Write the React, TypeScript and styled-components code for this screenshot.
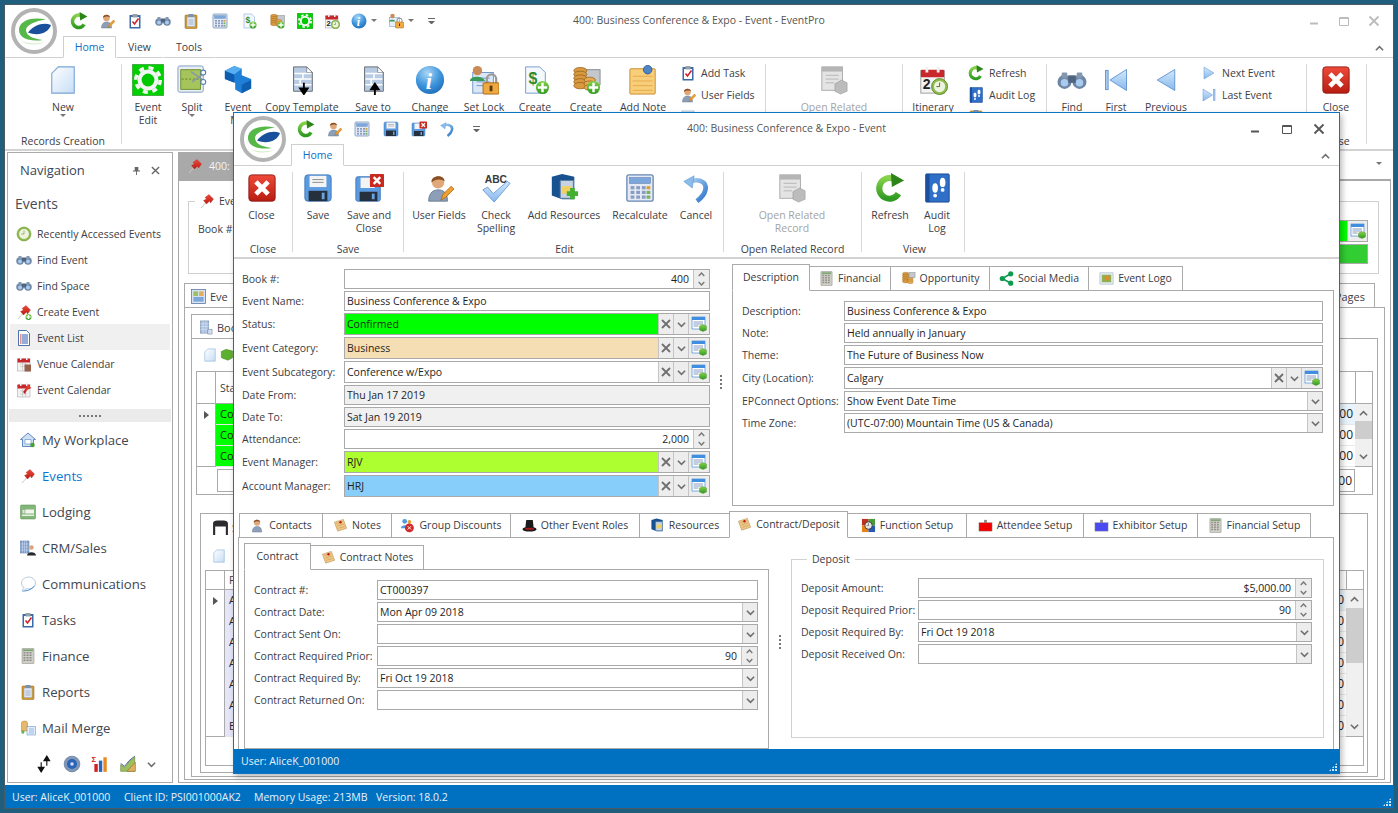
import React, { ReactNode } from "react";
import styled, { createGlobalStyle } from "styled-components";

const GlobalStyle = createGlobalStyle`
  html, body { margin: 0; padding: 0; background: #1f5f7d; overflow: hidden; }
  body { font-family: "Open Sans", "Noto Sans", sans-serif; font-size: 10.5px; color: #3d3d45; }
  * { box-sizing: border-box; }
`;

const TEXT = { fontFamily: "Liberation Sans, sans-serif" };

// icon drawings, all on a 32 x 32 canvas
const page = (fill = "#f4f8fd", stroke = "#6f9ad0") => (
  <path d="M6 2 H21 L27 8 V30 H6Z" fill={fill} stroke={stroke} />
);
const plus = (x = 23, y = 23, r = 7) => (
  <>
    <circle cx={x} cy={y} r={r} fill="url(#gGreen)" />
    <path d={`M${x - r + 2} ${y}H${x + r - 2}M${x} ${y - r + 2}V${y + r - 2}`} stroke="#fff" strokeWidth="2.6" />
  </>
);
const person = (
  <>
    <path d="M5 30 C5 20 11 18 15 18 C20 18 25 20 25 30Z" fill="#8d9fb8" stroke="#6b7c93" />
    <circle cx="15" cy="10" r="6.5" fill="#e0a878" />
    <path d="M8 10 C7 2 22 1 22 9 C19 6 12 6 8 10Z" fill="#8a4f24" />
  </>
);
const pencil = <path d="M18 29 L20 23 L29 14 L32 17 L23 26Z" fill="#f0a030" stroke="#a86410" strokeWidth=".8" />;
const cube = <path d="M17 20 L24 17 L31 20 V28 L24 31 L17 28Z" fill="url(#gGreen)" stroke="#3c7a10" strokeWidth=".6" />;
const coins = (
  <>
    {[6, 10, 14, 18, 22].map((y) => (
      <ellipse key={y} cx="10" cy={y} rx="7" ry="3.4" fill="#d9993f" stroke="#94601c" strokeWidth=".8" />
    ))}
    {[16, 20, 24].map((y) => (
      <ellipse key={y} cx="20" cy={y} rx="6" ry="3" fill="#e5ac52" stroke="#94601c" strokeWidth=".8" />
    ))}
  </>
);
const cabinet = (
  <>
    <path d="M3 4 L14 1 L27 4 V28 H14 L3 24Z" fill="#17518f" />
    <path d="M12 8 H26 V27 H12Z" fill="#c5d3e3" stroke="#5f7ea3" />
    <path d="M14 14 H24 V22 H14Z" fill="#f0d060" />
  </>
);
const pin = (
  <>
    <path d="M4 30 L13 20" stroke="#c9c9c9" strokeWidth="2" />
    <path d="M12 9 L20 3 L29 12 L23 20 L21 16 L15 22 L9 15 L15 12Z" fill="url(#gRed)" stroke="#a81010" strokeWidth=".6" />
  </>
);
const clockFace = (cx: number, cy: number, r: number) => (
  <>
    <circle cx={cx} cy={cy} r={r} fill="#8fbc4f" stroke="#5e8a2a" />
    <circle cx={cx} cy={cy} r={r * 0.7} fill="#eef3df" />
    <path d={`M${cx} ${cy - r * 0.5}V${cy}H${cx - r * 0.4}`} stroke="#4f6f2a" fill="none" />
  </>
);
const calendar = (
  <>
    <rect x="3" y="6" width="25" height="24" fill="#f3f3f3" stroke="#9b9b9b" />
    <rect x="3" y="5" width="25" height="8" rx="1" fill="#c8282c" />
    <rect x="8" y="2" width="3" height="6" fill="#f0f0f0" />
    <rect x="20" y="2" width="3" height="6" fill="#f0f0f0" />
  </>
);
const cells = [8, 13, 18, 23].flatMap((y) =>
  [7, 13, 19].map((x) => <rect key={`${x}-${y}`} x={x} y={y} width="4" height="3" fill="#8e8e86" />),
);
const doc = (
  <>
    <path d="M7 2 H21 L27 8 V28 H7Z" fill="#b7cbe3" stroke="#62676e" />
    <path d="M21 2 V8 H27Z" fill="#fff" stroke="#62676e" strokeWidth=".7" />
    <path d="M8 9H26M8 15H26M8 21H26M17 9V15M14 15V21" stroke="#fff" strokeWidth="1.6" />
  </>
);
const noteEnv = (
  <>
    <path d="M3 9 L22 3 L29 22 L10 28Z" fill="#f0c98a" stroke="#a87a32" />
    <path d="M7 12 L21 8M9 17 L23 13M11 22 L25 18" stroke="#b5863a" />
    <circle cx="16" cy="9" r="2.5" fill="#c01818" />
  </>
);
const ICONS: Record<string, ReactNode> = {
  refresh: (
    <>
      <path d="M25 22 A11 11 0 1 1 19 6" fill="none" stroke="url(#gGreen)" strokeWidth="6.5" />
      <path d="M17 0 L31 8 L18 15Z" fill="#2d8418" />
    </>
  ),
  userEdit: <>{person}{pencil}</>,
  task: (
    <>
      <rect x="5" y="4" width="22" height="27" rx="1" fill="#3a6ba8" />
      <rect x="8" y="8" width="16" height="20" fill="#fff" />
      <rect x="11" y="2" width="10" height="7" rx="1" fill="#9aa0a8" />
      <path d="M11 17 L15 22 L23 11" fill="none" stroke="#d0202a" strokeWidth="3" />
    </>
  ),
  binoculars: (
    <>
      <circle cx="8" cy="18" r="7.5" fill="#6f87a6" />
      <circle cx="24" cy="18" r="7.5" fill="#6f87a6" />
      <circle cx="8" cy="19" r="4" fill="#a9cbef" />
      <circle cx="24" cy="19" r="4" fill="#a9cbef" />
      <rect x="12" y="11" width="8" height="8" fill="#4f6480" />
      <rect x="5" y="8" width="6" height="6" rx="1" fill="#8397af" />
      <rect x="21" y="8" width="6" height="6" rx="1" fill="#8397af" />
    </>
  ),
  clipOrange: (
    <>
      <rect x="4" y="4" width="24" height="27" rx="2" fill="#d59a2e" stroke="#8d6114" />
      <rect x="8" y="8" width="16" height="19" fill="#dfe8f4" stroke="#8aa0bb" />
      <rect x="11" y="2" width="10" height="6" rx="1" fill="#7792b5" />
      <path d="M11 14H21M11 18H21M11 22H21" stroke="#6c7f98" />
    </>
  ),
  calc: (
    <>
      <rect x="2" y="2" width="28" height="28" rx="2" fill="#e3eaf6" stroke="#6685b4" strokeWidth="1.4" />
      <rect x="5" y="5" width="22" height="6" fill="#7ca7dc" stroke="#5678a8" strokeWidth=".6" />
      {[14, 19, 24].flatMap((y) =>
        [6, 12, 18, 23].map((x, i) => (
          <rect key={`${x}${y}`} x={x} y={y} width="4" height="3.4" fill={i === 3 ? (y === 14 ? "#e0a030" : "#7bb060") : "#8a9cc0"} />
        )),
      )}
    </>
  ),
  moneyAdd: (
    <>
      {page()}
      <text x="9" y="20" fontSize="17" fontWeight="700" fill="#2f8a2f" style={TEXT}>$</text>
      {plus(24, 24, 7)}
    </>
  ),
  coinsAdd: (
    <>
      <rect x="14" y="5" width="17" height="16" fill="#c4c8cc" stroke="#85898d" />
      {coins}
      {plus(24, 24, 7)}
    </>
  ),
  gear: (
    <>
      <rect x="0" y="0" width="32" height="32" fill="#00d000" stroke="#8a8a8a" />
      <circle cx="16" cy="16" r="10.5" fill="#f4f4f4" />
      <circle cx="16" cy="16" r="12.2" fill="none" stroke="#f4f4f4" strokeWidth="3.6" strokeDasharray="5 4.6" />
      <circle cx="16" cy="16" r="6.4" fill="#00c800" />
    </>
  ),
  cal20: (
    <>
      {calendar}
      <text x="5" y="26" fontSize="15" fontWeight="700" fill="#222" style={TEXT}>2</text>
      {clockFace(23, 23, 8.5)}
    </>
  ),
  info: (
    <>
      <circle cx="16" cy="16" r="15" fill="url(#gBall)" />
      <text x="11.5" y="26" fontSize="24" fontStyle="italic" fontWeight="700" fill="#fff" style={{ fontFamily: "Liberation Serif, serif" }}>i</text>
    </>
  ),
  lockUser: (
    <>
      <rect x="3" y="9" width="20" height="18" fill="#e6eefa" stroke="#6c93c8" />
      <circle cx="9" cy="6" r="4.5" fill="#c98b58" />
      <path d="M2 17 C2 12 14 12 15 17Z" fill="#3a9a5a" />
      <path d="M18 19 V15 A5 5 0 0 1 28 15 V19" fill="none" stroke="#8a8a8a" strokeWidth="2" />
      <rect x="15" y="18" width="16" height="12" rx="1" fill="#f0a840" stroke="#a86a14" />
      <rect x="22" y="21" width="2" height="5" fill="#5a3a10" />
    </>
  ),
  newPage: <path d="M11 2 H28 V30 H4 V9Z" fill="url(#gPage)" stroke="#7aa6d6" strokeWidth="1.2" />,
  split: (
    <>
      <rect x="1" y="1" width="27" height="28" rx="2" fill="#e8eef6" stroke="#7f9cc0" />
      <rect x="4" y="5" width="21" height="21" fill="#a6c45c" stroke="#6f8f2c" />
      <path d="M5 15H24" stroke="#5a7a20" strokeDasharray="2 2" />
      <path d="M15 7 L29 17M29 9 L16 18" stroke="#8a96a8" strokeWidth="1.6" />
      <circle cx="28" cy="8" r="2.6" fill="#fff" stroke="#5080b8" strokeWidth="1.2" />
      <circle cx="28" cy="18" r="2.6" fill="#fff" stroke="#5080b8" strokeWidth="1.2" />
    </>
  ),
  block: (
    <>
      <path d="M2 6 L12 1 L20 4 V11 L30 15 V25 L20 30 L13 26 V19 L2 15Z" fill="#1f7ed6" />
      <path d="M2 6 L12 10 V19 L2 15Z" fill="#0d5cb0" />
      <path d="M20 21 L30 16 V25 L20 30Z" fill="#0f5eb0" />
      <path d="M12 1 L20 4 L12 10 L2 6Z" fill="#56adf0" />
    </>
  ),
  tplDown: (
    <>
      {doc}
      <path d="M18 19 V28M14 25 L18 31 L22 25Z" fill="#000" stroke="#000" strokeWidth="2" />
    </>
  ),
  tplUp: (
    <>
      {doc}
      <path d="M18 32 V23M14 26 L18 20 L22 26Z" fill="#000" stroke="#000" strokeWidth="2" />
    </>
  ),
  setLock: (
    <>
      <rect x="4" y="8" width="22" height="22" fill="#dbe7f7" stroke="#6c93c8" />
      <path d="M8 14H22M8 18H22M8 22H16" stroke="#6c93c8" />
      <circle cx="9" cy="6" r="5" fill="#c98b58" />
      <path d="M1 17 C1 11 15 11 17 17Z" fill="#3a9a5a" />
      <path d="M19 20 V15 A5 5 0 0 1 29 15 V20" fill="none" stroke="#9a9a9a" strokeWidth="2.4" />
      <rect x="15" y="19" width="17" height="12" rx="1" fill="#f0a840" stroke="#a86a14" />
      <rect x="22" y="22" width="3" height="6" fill="#5a3a10" />
    </>
  ),
  note: (
    <>
      <rect x="2" y="4" width="27" height="27" rx="1" fill="#f7cf7a" stroke="#c98a2a" />
      <path d="M5 12H26M5 17H26M5 22H26M5 27H26" stroke="#e9a84a" />
      <circle cx="21" cy="5" r="4.5" fill="#4f86c8" stroke="#2c5a96" />
    </>
  ),
  related: (
    <>
      <rect x="3" y="2" width="22" height="25" fill="#e4e4e4" stroke="#aaa" />
      <rect x="3" y="2" width="22" height="5" fill="#b5b5b5" />
      <path d="M7 11H21M7 15H21M7 19H16" stroke="#b5b5b5" />
      <path d="M17 20 L24 16 L30 19 V28 L23 31 L17 28Z" fill="#bcbcbc" stroke="#9a9a9a" strokeWidth=".6" />
    </>
  ),
  audit: (
    <>
      <rect x="4" y="1" width="25" height="30" rx="1" fill="#2f6fc8" stroke="#1a4a90" />
      <rect x="4" y="1" width="4" height="30" fill="#1c4f9e" />
      <ellipse cx="14" cy="16" rx="3" ry="5" fill="#fff" />
      <circle cx="14" cy="24" r="2" fill="#fff" />
      <ellipse cx="22" cy="10" rx="3" ry="5" fill="#fff" />
      <circle cx="22" cy="18" r="2" fill="#fff" />
    </>
  ),
  first: (
    <>
      <rect x="4" y="5" width="3" height="22" fill="#a8ccf0" stroke="#5a90d0" />
      <path d="M28 4 V28 L9 16Z" fill="url(#gTri)" stroke="#5a90d0" />
    </>
  ),
  prev: <path d="M26 4 V28 L6 16Z" fill="url(#gTri)" stroke="#5a90d0" />,
  next: <path d="M6 4 V28 L26 16Z" fill="url(#gTri)" stroke="#5a90d0" />,
  last: (
    <>
      <path d="M4 4 V28 L23 16Z" fill="url(#gTri)" stroke="#5a90d0" />
      <rect x="25" y="5" width="3" height="22" fill="#a8ccf0" stroke="#5a90d0" />
    </>
  ),
  close: (
    <>
      <rect x="2" y="2" width="28" height="28" rx="3" fill="url(#gRed)" stroke="#8f1a12" />
      <path d="M9.5 9.5 L22.5 22.5M22.5 9.5 L9.5 22.5" stroke="#fff" strokeWidth="5" />
    </>
  ),
  save: (
    <>
      <rect x="2" y="2" width="28" height="28" rx="3" fill="#5c9be0" stroke="#3f78bb" />
      <rect x="7" y="3" width="18" height="12" fill="#f4f4f4" />
      <path d="M10 7H22M10 10H22" stroke="#8a8a8a" />
      <rect x="6" y="19" width="20" height="11" fill="#26303c" />
      <rect x="20" y="21" width="3" height="7" fill="#6aa4e0" />
    </>
  ),
  saveClose: (
    <>
      <rect x="2" y="4" width="26" height="26" rx="2" fill="#5c9be0" stroke="#3f78bb" />
      <rect x="7" y="5" width="15" height="11" fill="#f4f4f4" />
      <rect x="6" y="20" width="19" height="10" fill="#26303c" />
      <rect x="19" y="22" width="3" height="6" fill="#6aa4e0" />
      <rect x="17" y="1" width="15" height="14" rx="1" fill="#c92a20" />
      <path d="M21 4.5 L28 11.5M28 4.5 L21 11.5" stroke="#fff" strokeWidth="2.6" />
    </>
  ),
  check: (
    <>
      <text x="4" y="11" fontSize="11" fontWeight="700" fill="#3a3a3a" style={TEXT}>ABC</text>
      <path d="M2 18 L7 15 L13 22 L28 9 L31 11 L14 31Z" fill="url(#gTri)" stroke="#6a9ed8" />
    </>
  ),
  addRes: <>{cabinet}<path d="M19 22H31M25 16V28" stroke="#44b030" strokeWidth="5" /></>,
  undo: (
    <>
      <path d="M7 10 C18 5 28 9 26 18 C25 23 21 27 17 30" fill="none" stroke="url(#gTri2)" strokeWidth="5" />
      <path d="M3 9 L14 3 L12 16Z" fill="#8cbcec" stroke="#5a90d0" strokeWidth=".6" />
    </>
  ),
  clock: clockFace(16, 16, 14),
  pin,
  pinAdd: <>{pin}{plus(25, 26, 6)}</>,
  list: (
    <>
      <path d="M5 1 H21 L27 7 V31 H5Z" fill="#fff" stroke="#1f4f96" strokeWidth="1.6" />
      {[9, 13, 17, 21, 25].map((y) => (
        <g key={y}>
          <rect x="8" y={y} width="3" height="2" fill="#c02020" />
          <rect x="12" y={y} width="12" height="2" fill="#2a5ab0" />
        </g>
      ))}
    </>
  ),
  venueCal: (
    <>
      {calendar}
      <path d="M8 16H23M8 21H23M13 13V30M19 13V30" stroke="#b5b5b5" />
      <rect x="17" y="17" width="13" height="14" fill="#96604a" />
    </>
  ),
  eventCal: (
    <>
      {calendar}
      <path d="M8 18H23M8 24H23M13 13V30M19 13V30" stroke="#b5b5b5" />
      <path d="M14 20 L24 6 L31 12 L22 16 L18 24Z" fill="url(#gRed)" />
    </>
  ),
  home: (
    <>
      <path d="M1 15 L16 2 L31 15 L27 15 V29 H5 V15Z" fill="#cfe0f4" stroke="#3f74b4" strokeWidth="1.6" />
      <path d="M10 15 H22 V24 H10Z" fill="#fff" stroke="#3f74b4" />
      <circle cx="25" cy="26" r="4.5" fill="#4aa030" />
    </>
  ),
  bed: (
    <>
      <rect x="1" y="2" width="30" height="28" rx="2" fill="#83b77a" stroke="#55884c" />
      <rect x="4" y="11" width="24" height="8" fill="#f4f4ee" />
      <rect x="4" y="11" width="6" height="8" fill="#d8e6d4" stroke="#6a9a60" />
      <rect x="4" y="21" width="24" height="3" fill="#e6efe2" />
    </>
  ),
  crm: (
    <>
      <rect x="1" y="2" width="17" height="24" fill="#7fa0d0" stroke="#50709f" />
      <path d="M5 2V26M9 2V26M13 2V26M1 8H18M1 14H18M1 20H18" stroke="#e4edf7" strokeWidth=".8" />
      <circle cx="23" cy="15" r="4.5" fill="#d8a67a" />
      <path d="M14 31 C14 22 32 22 32 31Z" fill="#26282c" />
    </>
  ),
  bubble: (
    <>
      <ellipse cx="17" cy="14" rx="14" ry="12" fill="#fff" stroke="#9fb5cc" strokeWidth="1.4" />
      <path d="M5 30 C10 30 20 30 29 20" fill="none" stroke="#3f8ad0" strokeWidth="2" />
      <path d="M8 22 L4 30 L13 26" fill="#fff" stroke="#9fb5cc" strokeWidth="1.2" />
    </>
  ),
  calcGrey: (
    <>
      <rect x="4" y="1" width="24" height="30" rx="1" fill="#cfcfc8" stroke="#84847c" />
      <rect x="6" y="3" width="20" height="3" fill="#6f9f62" />
      {cells}
    </>
  ),
  merge: (
    <>
      <path d="M3 6 A6 4 0 0 1 15 6 V22 H3Z" fill="#e8b96a" stroke="#a87a2a" />
      <rect x="14" y="13" width="17" height="17" fill="#e4eefa" stroke="#4f86c8" />
      <path d="M18 18H28M18 22H28M18 26H28" stroke="#4f86c8" />
      <path d="M2 24H9M6 21V28" stroke="#3aa030" strokeWidth="2" />
    </>
  ),
  tableAdd: (
    <>
      <rect x="2" y="2" width="26" height="24" fill="#fff" stroke="#2f7ad0" strokeWidth="1.2" />
      <rect x="2" y="2" width="26" height="6" fill="#3f8ee0" />
      <path d="M5 12H24M5 16H24M5 20H15" stroke="#5f7fa8" strokeWidth="1.5" />
      {cube}
    </>
  ),
  sort: (
    <>
      <path d="M11 29 V13M6 22 L11 30 L16 22Z" fill="#111" stroke="#111" strokeWidth="2" />
      <path d="M21 3 V19M16 10 L21 2 L26 10Z" fill="#111" stroke="#111" strokeWidth="2" />
    </>
  ),
  disc: (
    <>
      <circle cx="16" cy="16" r="14" fill="#8097b5" stroke="#4f6a8c" />
      <circle cx="16" cy="16" r="9" fill="#2a64b8" />
      <circle cx="16" cy="16" r="3" fill="#d8e4f4" />
    </>
  ),
  bars: (
    <>
      <text x="1" y="13" fontSize="14" fontWeight="700" fill="#d02020" style={TEXT}>Σ</text>
      <rect x="6" y="16" width="6" height="14" fill="#d02020" />
      <rect x="14" y="10" width="6" height="20" fill="#2a64c0" />
      <rect x="22" y="4" width="6" height="26" fill="#e88a20" />
    </>
  ),
  chart: (
    <>
      <path d="M3 29 V17 L10 22 L18 12 L28 3 V29Z" fill="#9cc060" stroke="#5a7a2a" />
      <path d="M3 15 L10 20 L18 10 L28 2" fill="none" stroke="#3a5a9a" strokeWidth="1.6" />
      <path d="M14 29 L29 13 V29Z" fill="#e0b060" stroke="#8a6a20" />
    </>
  ),
  share: (
    <>
      <path d="M25 6 L7 16 L25 26" fill="none" stroke="#0f9a50" strokeWidth="3.4" />
      <circle cx="25" cy="6" r="5.5" fill="#0f9a50" />
      <circle cx="7" cy="16" r="5.5" fill="#0f9a50" />
      <circle cx="25" cy="26" r="5.5" fill="#0f9a50" />
    </>
  ),
  picture: (
    <>
      <rect x="2" y="4" width="28" height="24" fill="#e4ecf4" stroke="#8a9ab0" />
      <rect x="6" y="8" width="20" height="16" fill="#8fb050" />
      <circle cx="17" cy="15" r="5" fill="#e08a30" />
    </>
  ),
  coins: <>{coins}<rect x="17" y="3" width="13" height="11" fill="#c4c8cc" stroke="#85898d" /></>,
  contact: person,
  noteEnv,
  group: (
    <>
      <circle cx="10" cy="7" r="5" fill="#4f9ae0" />
      <path d="M2 22 C2 13 18 13 18 22Z" fill="#4f9ae0" />
      <circle cx="20" cy="8" r="4" fill="#e0a030" />
      <circle cx="20" cy="21" r="9.5" fill="#d02a2a" />
      <path d="M16.5 17.5 L23.5 24.5M23.5 17.5 L16.5 24.5" stroke="#fff" strokeWidth="2" />
    </>
  ),
  hat: (
    <>
      <path d="M9 4 H23 L25 22 H7Z" fill="#1a1a1a" />
      <ellipse cx="16" cy="24" rx="15" ry="5" fill="#1a1a1a" />
      <path d="M7 21 H25 V25 H7Z" fill="#b01818" />
    </>
  ),
  resources: cabinet,
  func: (
    <>
      <rect x="2" y="2" width="14" height="14" fill="#c03020" />
      <rect x="16" y="2" width="14" height="14" fill="#4a9a3a" />
      <rect x="2" y="16" width="14" height="14" fill="#e8801a" />
      <rect x="16" y="16" width="14" height="14" fill="#2a5ab0" />
      <circle cx="16" cy="16" r="8" fill="#e4e4e4" stroke="#222" strokeWidth="1.6" />
      <path d="M16 11V16H12" stroke="#222" fill="none" />
    </>
  ),
  attendee: (
    <>
      <rect x="13" y="4" width="6" height="8" fill="#8a8a8a" />
      <rect x="2" y="10" width="28" height="18" fill="#f00000" stroke="#9a9a9a" />
    </>
  ),
  exhibitor: (
    <>
      <rect x="13" y="4" width="6" height="8" fill="#8a8a8a" />
      <rect x="2" y="10" width="28" height="18" fill="#4a4af0" stroke="#9a9a9a" />
    </>
  ),
  grid: (
    <>
      <rect x="5" y="2" width="18" height="26" fill="#a8bfe0" stroke="#62789c" />
      <path d="M5 8H23M5 14H23M5 20H23M11 2V28M17 2V28" stroke="#e8eef8" />
      <rect x="21" y="20" width="9" height="10" fill="#d0dcec" stroke="#62789c" />
    </>
  ),
  panels: (
    <>
      <rect x="1" y="1" width="30" height="30" fill="#d9e4f2" stroke="#54709a" strokeWidth="1.6" />
      <rect x="5" y="5" width="10" height="10" fill="#9cc060" />
      <rect x="17" y="5" width="10" height="10" fill="#e0b060" />
      <rect x="5" y="17" width="22" height="10" fill="#7ca7dc" />
    </>
  ),
  table: (
    <>
      <path d="M2 30 V9 C2 4 6 3 16 3 C26 3 30 4 30 9 V30 H26 V14 H6 V30Z" fill="#2c2c30" />
    </>
  ),
  lines: <rect x="4" y="4" width="24" height="24" fill="#dde7f4" stroke="#7f9cc0" />,
  greenBox: <path d="M3 8 L14 3 L29 7 V22 L18 28 L3 22Z" fill="#5cb030" stroke="#3c7a10" />,
};

const IconSvg = styled.svg<{ $s: number }>`
  display: block;
  flex: none;
  width: ${(p) => p.$s}px;
  height: ${(p) => p.$s}px;
`;

function Icon({ name, size = 16 }: { name: string; size?: number }) {
  return (
    <IconSvg $s={size} viewBox="0 0 32 32">
      {ICONS[name]}
    </IconSvg>
  );
}

const DefsSvg = styled.svg`
  display: block;
  width: 0;
  height: 0;
`;

function SharedDefs() {
  return (
    <DefsSvg>
      <defs>
        <linearGradient id="gGreen" x1="0" y1="0" x2="0" y2="1">
          <stop offset="0" stopColor="#86d24a" />
          <stop offset="1" stopColor="#2f9a20" />
        </linearGradient>
        <linearGradient id="gRed" x1="0" y1="0" x2="0" y2="1">
          <stop offset="0" stopColor="#ef4a3a" />
          <stop offset="1" stopColor="#b81c12" />
        </linearGradient>
        <linearGradient id="gPage" x1="0" y1="0" x2="1" y2="1">
          <stop offset="0" stopColor="#fdfeff" />
          <stop offset="1" stopColor="#c7def5" />
        </linearGradient>
        <linearGradient id="gTri" x1="0" y1="0" x2="0" y2="1">
          <stop offset="0" stopColor="#d4e8fa" />
          <stop offset="1" stopColor="#86b8ec" />
        </linearGradient>
        <linearGradient id="gTri2" x1="0" y1="0" x2="1" y2="1">
          <stop offset="0" stopColor="#b4d4f4" />
          <stop offset="1" stopColor="#2a74c8" />
        </linearGradient>
        <radialGradient id="gBall" cx=".4" cy=".25" r=".85">
          <stop offset="0" stopColor="#a9d6f7" />
          <stop offset=".55" stopColor="#3d94dc" />
          <stop offset="1" stopColor="#1a66b4" />
        </radialGradient>
      </defs>
    </DefsSvg>
  );
}

function Logo() {
  return (
    <IconSvg $s={46} viewBox="0 0 46 46">
      <circle cx="23" cy="23" r="21" fill="#fff" stroke="#b3b3b3" strokeWidth="4" />
      <path d="M35 11.5 C20 8 8 13 8 22 C8 30 18 34 32 32 C23 31 15 28 15 22 C15 17 24 13 35 11.5Z" fill="#55b848" />
      <path d="M17 24.5 C23 17 32 14 40 17 C38 24 28 29 17 24.5Z" fill="#1a4f9c" />
      <path d="M10 33 C18 38 28 37 34 34 C26 36 18 36 10 33Z" fill="#d4ebc8" />
    </IconSvg>
  );
}

// page skeleton
const Desktop = styled.div`
  width: 1398px;
  height: 813px;
  padding: 4px;
  position: relative;
`;

const MainWindow = styled.div`
  width: 1390px;
  height: 805px;
  border: 1px solid #4a5a64;
  background: #fff;
  display: flex;
  flex-direction: column;
`;

const Header = styled.div<{ $logo: number }>`
  display: grid;
  grid-template-columns: ${(p) => p.$logo}px 1fr;
  grid-template-rows: 31px 21px;
  border-bottom: 1px solid #cfcfcf;
  flex: none;
`;

const LogoCell = styled.div`
  grid-column: 1;
  grid-row: 1 / 3;
  padding: 3px 0 0 6px;
`;

const Title = styled.div`
  grid-column: 1 / -1;
  grid-row: 1;
  justify-self: center;
  align-self: center;
  color: #555;
  padding-bottom: 2px;
`;

const Qat = styled.div<{ $left: number }>`
  grid-column: 2;
  grid-row: 1;
  display: flex;
  align-items: center;
  padding-left: ${(p) => p.$left}px;
`;

const QatItem = styled.div<{ $w: number }>`
  width: ${(p) => p.$w}px;
  display: flex;
  align-items: center;
  justify-content: center;
  gap: 4px;
`;

const Caret = styled.span`
  width: 0;
  height: 0;
  border: 3px solid transparent;
  border-top: 3px solid #777;
  border-bottom: 0;
  display: block;
  flex: none;
`;

const QatMore = styled.span`
  display: block;
  width: 7px;
  height: 6px;
  border-top: 1px solid #666;
  &::after {
    content: "";
    display: block;
    margin: 2px 0 0 0;
    border: 3.5px solid transparent;
    border-top: 3px solid #666;
    border-bottom: 0;
  }
`;

const Controls = styled.div<{ $dim?: boolean }>`
  grid-column: 2;
  grid-row: 1;
  justify-self: end;
  display: flex;
  align-items: center;
  padding-right: 4px;
  color: ${(p) => (p.$dim ? "#bcbcbc" : "#555")};
`;

const ControlBtn = styled.div<{ $w: number }>`
  width: ${(p) => p.$w}px;
  height: 28px;
  display: flex;
  align-items: center;
  justify-content: center;
`;

const TabsRow = styled.div`
  grid-column: 2;
  grid-row: 2;
  display: flex;
  align-items: flex-end;
  margin-bottom: -1px;
`;

const RibbonTab = styled.div<{ $active?: boolean; $w: number }>`
  width: ${(p) => p.$w}px;
  height: 22px;
  display: flex;
  align-items: center;
  justify-content: center;
  color: ${(p) => (p.$active ? "#0c6fc4" : "#3d3d45")};
  background: #fff;
  border: 1px solid ${(p) => (p.$active ? "#cfcfcf" : "transparent")};
  border-bottom: 1px solid ${(p) => (p.$active ? "#fff" : "#cfcfcf")};
`;

const Collapse = styled.div`
  margin-left: auto;
  padding: 0 9px 5px 0;
`;

const Ribbon = styled.div`
  height: 93px;
  flex: none;
  display: flex;
  padding-top: 6px;
  border-bottom: 2px solid #d2d2d2;
  overflow: hidden;
`;

const Group = styled.div<{ $w: number; $pad?: number }>`
  width: ${(p) => p.$w}px;
  height: 80px;
  padding-left: ${(p) => p.$pad ?? 0}px;
  border-right: 1px solid #d8d8d8;
  flex: none;
  display: flex;
  flex-direction: column;
`;

const GroupBody = styled.div`
  height: 69px;
  display: flex;
  flex: none;
`;

const GroupLabel = styled.div`
  height: 11px;
  line-height: 16px;
  text-align: center;
  white-space: nowrap;
`;

const LargeBtn = styled.div<{ $w: number; $off?: boolean }>`
  width: ${(p) => p.$w}px;
  flex: none;
  display: flex;
  flex-direction: column;
  align-items: center;
  color: ${(p) => (p.$off ? "#a3a3a3" : "#3d3d45")};
`;

const LargeIcon = styled.div`
  height: 32px;
  display: flex;
  align-items: center;
  justify-content: center;
`;

const LargeText = styled.div`
  margin-top: 5px;
  line-height: 13px;
  text-align: center;
  white-space: pre-line;
`;

const SmallCol = styled.div<{ $pad: number }>`
  margin-top: -2px;
  padding-left: ${(p) => p.$pad}px;
  display: flex;
  flex-direction: column;
`;

const SmallBtn = styled.div`
  height: 22px;
  display: flex;
  align-items: center;
  gap: 5px;
  white-space: nowrap;
`;

const Body = styled.div`
  flex: 1;
  min-height: 0;
  display: flex;
  gap: 5px;
  padding: 1px 2px 2px;
`;

const StatusBar = styled.div<{ $h: number }>`
  height: ${(p) => p.$h}px;
  flex: none;
  background: #0070c0;
  color: #e8f2fa;
  display: flex;
  align-items: center;
  padding: 0 7px;
`;

const StatusItem = styled.span<{ $w: number }>`
  width: ${(p) => p.$w}px;
  flex: none;
`;

const Grip = styled.span`
  width: 8px;
  height: 8px;
  margin: 0 -5px 2px auto;
  align-self: flex-end;
  flex: none;
  background: radial-gradient(circle at 1px 1px, #cfe4f5 1px, transparent 1.2px) 0 0 / 3px 3px;
  clip-path: polygon(100% 0, 100% 100%, 0 100%);
`;

// navigation pane
const Nav = styled.div`
  width: 166px;
  flex: none;
  border: 1px solid #aaa;
  display: flex;
  flex-direction: column;
`;

const NavHead = styled.div`
  height: 34px;
  padding: 0 12px;
  display: flex;
  align-items: center;
  font-size: 13px;
  color: #38465a;
`;

const NavTools = styled.div`
  margin-left: auto;
  display: flex;
  align-items: center;
  gap: 10px;
  color: #666;
`;

const NavSection = styled.div`
  font-size: 14px;
  padding: 7px 0 0 7px;
  height: 30px;
  line-height: 20px;
  color: #4a4a52;
`;

const NavList = styled.div`
  display: flex;
  flex-direction: column;
  padding: 3px 2px 0;
`;

const NavItem = styled.div<{ $on?: boolean }>`
  height: 26px;
  display: flex;
  align-items: center;
  gap: 5px;
  padding: 2px 0 0 6px;
  white-space: nowrap;
  background: ${(p) => (p.$on ? "#f0f0f0" : "transparent")};
`;

const NavSplit = styled.div`
  height: 13px;
  margin: 7px 1px 0;
  background: #ebebeb;
  display: flex;
  align-items: center;
  justify-content: center;
  &::after {
    content: "";
    width: 22px;
    height: 2px;
    background: repeating-linear-gradient(90deg, #777 0 2px, transparent 2px 4px);
  }
`;

const BigList = styled.div`
  display: flex;
  flex-direction: column;
`;

const BigItem = styled.div<{ $on?: boolean }>`
  height: 36px;
  display: flex;
  align-items: center;
  gap: 6px;
  padding-left: 12px;
  font-size: 13.2px;
  color: ${(p) => (p.$on ? "#0a78d2" : "#3f4650")};
`;

const NavFoot = styled.div`
  margin-top: auto;
  height: 36px;
  padding-left: 27px;
  display: flex;
  align-items: center;
  gap: 10px;
`;

// document behind the dialog
const DocCol = styled.div`
  flex: 1;
  min-width: 0;
  display: flex;
  flex-direction: column;
`;

const DocStrip = styled.div`
  height: 27px;
  flex: none;
  display: flex;
  align-items: center;
`;

const DocTab = styled.div`
  width: 240px;
  height: 27px;
  background: #a9a9a9;
  color: #f4f4f4;
  display: flex;
  align-items: center;
  gap: 6px;
  padding: 0 9px;
  white-space: nowrap;
`;

const DocPage = styled.div`
  flex: 1;
  min-height: 0;
  border: 1px solid #a9a9a9;
  border-top-width: 2px;
  padding: 0 5px 2px;
  display: flex;
  flex-direction: column;
`;

const EventBox = styled.fieldset`
  height: 81px;
  margin: 12px 6px 9px 4px;
  padding: 0;
  border: 1px solid #d0d0d0;
  flex: none;
  display: flex;
  flex-direction: column;
  align-items: flex-end;
`;

const EventLegend = styled.legend`
  display: flex;
  align-items: center;
  gap: 4px;
  margin-left: 6px;
  padding: 0 4px;
`;

const EventBookRow = styled.div`
  width: 100%;
  display: flex;
  justify-content: space-between;
  align-items: flex-start;
  padding: 9px 10px 0 9px;
`;

const BookLabel = styled.span`
  margin-top: 4px;
`;

const EventBar = styled.div<{ $color: string }>`
  width: 900px;
  height: ${(p) => (p.$color === "#00ff00" ? 22 : 20)}px;
  margin-top: 2px;
  background: ${(p) => p.$color};
  border: 1px solid #aaa;
  display: flex;
  justify-content: flex-end;
`;

const SplitRow = styled.div`
  display: flex;
  flex-direction: column;
  align-items: flex-end;
`;

const BackTabs = styled.div`
  display: flex;
  justify-content: space-between;
  align-items: flex-end;
  flex: none;
`;

const BackTab = styled.div<{ $w: number; $mr?: number; $end?: boolean }>`
  width: ${(p) => p.$w}px;
  height: 25px;
  margin-right: ${(p) => p.$mr ?? 0}px;
  margin-bottom: -1px;
  background: #fff;
  border: 1px solid #aaa;
  border-bottom: 0;
  display: flex;
  align-items: center;
  justify-content: ${(p) => (p.$end ? "flex-end" : "flex-start")};
  gap: 4px;
  padding: 0 ${(p) => (p.$end ? 9 : 6)}px 0 6px;
  font-size: 11px;
  white-space: nowrap;
`;

const BackPanel = styled.div<{ $pad: string }>`
  flex: 1;
  min-height: 0;
  border: 1px solid #aaa;
  padding: ${(p) => p.$pad};
  display: flex;
  flex-direction: column;
`;

const BackTool = styled.div<{ $h: number }>`
  height: ${(p) => p.$h}px;
  flex: none;
  display: flex;
  align-items: center;
  gap: 3px;
  padding-left: 7px;
`;

const DataGrid = styled.div<{ $h: number; $mb?: number }>`
  height: ${(p) => p.$h}px;
  margin-bottom: ${(p) => p.$mb ?? 0}px;
  flex: none;
  border: 1px solid #aaa;
  display: flex;
  flex-direction: column;
`;

const GridHead = styled.div<{ $h: number }>`
  height: ${(p) => p.$h}px;
  flex: none;
  display: flex;
  border-bottom: 1px solid #aaa;
`;

const GridSel = styled.div`
  width: 19px;
  flex: none;
  border-right: 1px solid #aaa;
`;

const GridCaption = styled.div`
  flex: 1;
  display: flex;
  align-items: center;
  padding-left: 4px;
`;

const GridEnd = styled.div`
  width: 17px;
  flex: none;
  border-left: 1px solid #aaa;
`;

const GridBody = styled.div<{ $h: number }>`
  height: ${(p) => p.$h}px;
  flex: none;
  display: flex;
  border-bottom: 1px solid #aaa;
`;

const GridRows = styled.div`
  flex: 1;
  min-width: 0;
  display: flex;
  flex-direction: column;
`;

const GridRow = styled.div`
  height: 21px;
  flex: none;
  display: flex;
`;

const RowMark = styled.div`
  width: 19px;
  flex: none;
  border-right: 1px solid #aaa;
  display: flex;
  align-items: center;
  justify-content: center;
`;

const RowArrow = styled.span`
  width: 0;
  height: 0;
  border: 4px solid transparent;
  border-left: 5px solid #555;
  border-right: 0;
  display: block;
`;

const RowCell = styled.div<{ $bg: string }>`
  width: 160px;
  flex: none;
  background: ${(p) => p.$bg};
  border-bottom: 1px solid #e6e6e6;
  color: #222;
  padding-left: 4px;
  font-size: 11px;
  line-height: 20px;
`;

const RowValue = styled.div<{ $bg?: string }>`
  flex: 1;
  background: ${(p) => p.$bg ?? "#fff"};
  border-bottom: 1px solid #e8e8e8;
  text-align: right;
  padding-right: 2px;
  font-size: 12px;
  line-height: 20px;
  color: #222;
`;

const Scroll = styled.div`
  width: 17px;
  flex: none;
  background: #f0f0f0;
  display: flex;
  flex-direction: column;
  align-items: center;
  justify-content: space-between;
  padding: 5px 0;
  position: relative;
`;

const ScrollThumb = styled.div<{ $top: number; $h: number }>`
  position: absolute;
  left: 0;
  right: 0;
  top: ${(p) => p.$top}px;
  height: ${(p) => p.$h}px;
  background: #cdcdcd;
`;

const GridFoot = styled.div`
  flex: 1;
  display: flex;
  padding: 2px 17px 3px 20px;
`;

const FootBox = styled.div`
  flex: 1;
  border: 1px solid #aaa;
  text-align: right;
  padding-right: 2px;
  font-size: 12px;
  line-height: 21px;
  color: #222;
`;

const LowerBack = styled.div`
  flex: 1;
  min-height: 0;
  margin: 0 5px 0 4px;
  border: 1px solid #aaa;
  padding: 0 3px 4px 4px;
  display: flex;
  flex-direction: column;
`;

// the event dialog
const Dialog = styled.div`
  position: absolute;
  left: 233px;
  top: 112px;
  width: 1107px;
  height: 662px;
  background: #fff;
  border: 1px solid #0b74c4;
  box-shadow: 2px 3px 6px rgba(0, 0, 0, 0.28);
  display: flex;
  flex-direction: column;
`;

const Content = styled.div`
  flex: 1;
  min-height: 0;
  display: flex;
  flex-direction: column;
`;

const UpperRow = styled.div`
  height: 247px;
  flex: none;
  display: flex;
`;

const EventForm = styled.div`
  width: 476px;
  padding: 10px 0 0 8px;
  display: flex;
  flex-direction: column;
  gap: 2px;
  flex: none;
`;

const FormRow = styled.div`
  display: flex;
  align-items: center;
  flex: none;
`;

const RowLabel = styled.div<{ $w: number }>`
  width: ${(p) => p.$w}px;
  flex: none;
  white-space: nowrap;
`;

const Input = styled.div<{ $h?: number; $bg?: string }>`
  flex: 1;
  min-width: 0;
  height: ${(p) => p.$h ?? 20}px;
  border: 1px solid #a9a9a9;
  background: ${(p) => p.$bg ?? "#fff"};
  display: flex;
`;

const InputText = styled.div<{ $right?: boolean }>`
  flex: 1;
  min-width: 0;
  padding: 0 ${(p) => (p.$right ? 4 : 2)}px;
  color: #1e1e1e;
  display: flex;
  align-items: center;
  justify-content: ${(p) => (p.$right ? "flex-end" : "flex-start")};
  white-space: nowrap;
`;

const FieldBtn = styled.div<{ $w: number }>`
  width: ${(p) => p.$w}px;
  flex: none;
  background: #ededed;
  border-left: 1px solid #c4c4c4;
  display: flex;
  flex-direction: column;
  align-items: center;
  justify-content: center;
  gap: 2px;
  color: #777;
`;

const Splitter = styled.div<{ $w: number; $y: number }>`
  width: ${(p) => p.$w}px;
  flex: none;
  display: flex;
  justify-content: center;
  padding-top: ${(p) => p.$y}px;
  &::after {
    content: "";
    width: 2px;
    height: 14px;
    background: repeating-linear-gradient(#777 0 2px, transparent 2px 4px);
  }
`;

const UpperRight = styled.div`
  width: 602px;
  flex: none;
  padding-top: 5px;
  display: flex;
  flex-direction: column;
`;

const TabStrip = styled.div<{ $left?: number }>`
  display: flex;
  align-items: flex-end;
  flex: none;
  padding-left: ${(p) => p.$left ?? 0}px;
`;

const FormTab = styled.div<{ $w: number; $active?: boolean }>`
  width: ${(p) => p.$w}px;
  height: ${(p) => (p.$active ? 27 : 25)}px;
  margin-left: -1px;
  margin-bottom: -1px;
  padding-bottom: 1px;
  background: #fff;
  border: 1px solid #aaa;
  border-bottom: 1px solid ${(p) => (p.$active ? "#fff" : "#aaa")};
  display: flex;
  align-items: center;
  justify-content: center;
  gap: 4px;
  white-space: nowrap;
  color: #3a3a42;
  position: relative;
  z-index: ${(p) => (p.$active ? 1 : 0)};
  &:first-child {
    margin-left: 0;
  }
`;

const TabPanel = styled.div`
  flex: 1;
  min-height: 0;
  border: 1px solid #aaa;
  display: flex;
`;

const DescForm = styled.div`
  flex: 1;
  padding: 10px 10px 0 9px;
  display: flex;
  flex-direction: column;
  gap: 2px;
`;

const LowerArea = styled.div`
  flex: 1;
  min-height: 0;
  padding: 5px 4px 0 4px;
  margin-right: 1px;
  display: flex;
  flex-direction: column;
`;

const LowerPanel = styled.div`
  flex: 1;
  min-height: 0;
  border: 1px solid #aaa;
  border-bottom: 0;
  display: flex;
  padding: 5px 0 0 5px;
`;

const ContractCol = styled.div`
  width: 525px;
  flex: none;
  display: flex;
  flex-direction: column;
`;

const ContractPanel = styled.div`
  flex: 1;
  min-height: 0;
  border: 1px solid #aaa;
  padding: 10px 10px 0 9px;
  display: flex;
  flex-direction: column;
  gap: 2px;
`;

const DepositBox = styled.fieldset`
  flex: none;
  width: 533px;
  height: 186px;
  margin: 9px 0 0 0;
  padding: 12px 11px 0 9px;
  border: 1px solid #d2d2d2;
  display: flex;
  flex-direction: column;
  gap: 2px;
`;

const DepositLegend = styled.legend`
  margin-left: 6px;
  padding: 0 5px;
  line-height: 14px;
`;

const Chevron = ({ up }: { up?: boolean }) => (
  <IconSvg $s={9} viewBox="0 0 10 10">
    <path d={up ? "M1 7 L5 3 L9 7" : "M1 3 L5 7 L9 3"} fill="none" stroke="#6f6f6f" strokeWidth="1.8" />
  </IconSvg>
);

const Clear = () => (
  <IconSvg $s={10} viewBox="0 0 10 10">
    <path d="M1 1 L9 9M9 1 L1 9" stroke="#6f6f6f" strokeWidth="1.8" />
  </IconSvg>
);

const WinMin = () => (
  <IconSvg $s={12} viewBox="0 0 12 12">
    <path d="M2 8.5H10" stroke="currentColor" strokeWidth="2" />
  </IconSvg>
);
const WinMax = () => (
  <IconSvg $s={12} viewBox="0 0 12 12">
    <path d="M1.5 2.5H10.5V10.5H1.5ZM1.5 3.5H10.5" fill="none" stroke="currentColor" />
  </IconSvg>
);
const WinClose = () => (
  <IconSvg $s={12} viewBox="0 0 12 12">
    <path d="M1.5 1.5 L10.5 10.5M10.5 1.5 L1.5 10.5" stroke="currentColor" strokeWidth="1.8" />
  </IconSvg>
);

const Spin = () => (
  <FieldBtn $w={16}>
    <IconSvg $s={7} viewBox="0 0 10 10">
      <path d="M1 7 L5 3 L9 7" fill="none" stroke="#777" strokeWidth="2" />
    </IconSvg>
    <IconSvg $s={7} viewBox="0 0 10 10">
      <path d="M1 3 L5 7 L9 3" fill="none" stroke="#777" strokeWidth="2" />
    </IconSvg>
  </FieldBtn>
);

const Drop = () => (
  <FieldBtn $w={15}>
    <Chevron />
  </FieldBtn>
);

const ComboBtns = () => (
  <>
    <FieldBtn $w={15}>
      <Clear />
    </FieldBtn>
    <Drop />
    <FieldBtn $w={21}>
      <Icon name="tableAdd" size={16} />
    </FieldBtn>
  </>
);

type FieldDef = {
  label: string;
  value?: string;
  kind: "text" | "spin" | "combo" | "drop";
  bg?: string;
};

function Fields({ rows, labelW }: { rows: FieldDef[]; labelW: number }) {
  return (
    <>
      {rows.map((r) => (
        <FormRow key={r.label}>
          <RowLabel $w={labelW}>{r.label}</RowLabel>
          <Input $h={r.kind === "combo" ? 22 : 20} $bg={r.bg}>
            <InputText $right={r.kind === "spin"}>{r.value}</InputText>
            {r.kind === "spin" && <Spin />}
            {r.kind === "combo" && <ComboBtns />}
            {r.kind === "drop" && <Drop />}
          </Input>
        </FormRow>
      ))}
    </>
  );
}

const eventFields: FieldDef[] = [
  { label: "Book #:", value: "400", kind: "spin" },
  { label: "Event Name:", value: "Business Conference & Expo", kind: "text" },
  { label: "Status:", value: "Confirmed", kind: "combo", bg: "#00ff00" },
  { label: "Event Category:", value: "Business", kind: "combo", bg: "#f5deb3" },
  { label: "Event Subcategory:", value: "Conference w/Expo", kind: "combo" },
  { label: "Date From:", value: "Thu Jan 17 2019", kind: "text", bg: "#f0f0f0" },
  { label: "Date To:", value: "Sat Jan 19 2019", kind: "text", bg: "#f0f0f0" },
  { label: "Attendance:", value: "2,000", kind: "spin" },
  { label: "Event Manager:", value: "RJV", kind: "combo", bg: "#adff2f" },
  { label: "Account Manager:", value: "HRJ", kind: "combo", bg: "#87cefa" },
];

const descFields: FieldDef[] = [
  { label: "Description:", value: "Business Conference & Expo", kind: "text" },
  { label: "Note:", value: "Held annually in January", kind: "text" },
  { label: "Theme:", value: "The Future of Business Now", kind: "text" },
  { label: "City (Location):", value: "Calgary", kind: "combo" },
  { label: "EPConnect Options:", value: "Show Event Date Time", kind: "drop" },
  { label: "Time Zone:", value: "(UTC-07:00) Mountain Time (US & Canada)", kind: "drop" },
];

const contractFields: FieldDef[] = [
  { label: "Contract #:", value: "CT000397", kind: "text" },
  { label: "Contract Date:", value: "Mon Apr 09 2018", kind: "drop" },
  { label: "Contract Sent On:", kind: "drop" },
  { label: "Contract Required Prior:", value: "90", kind: "spin" },
  { label: "Contract Required By:", value: "Fri Oct 19 2018", kind: "drop" },
  { label: "Contract Returned On:", kind: "drop" },
];

const depositFields: FieldDef[] = [
  { label: "Deposit Amount:", value: "$5,000.00", kind: "spin" },
  { label: "Deposit Required Prior:", value: "90", kind: "spin" },
  { label: "Deposit Required By:", value: "Fri Oct 19 2018", kind: "drop" },
  { label: "Deposit Received On:", kind: "drop" },
];

type Btn = { w: number; icon: string; text?: string; size?: number; caret?: boolean; off?: boolean };

function LargeButtons({ items }: { items: Btn[] }) {
  return (
    <>
      {items.map((b, i) => (
        <LargeBtn key={i} $w={b.w} $off={b.off}>
          <LargeIcon>
            <Icon name={b.icon} size={b.size ?? 30} />
          </LargeIcon>
          <LargeText>{b.text}</LargeText>
          {b.caret && <Caret />}
        </LargeBtn>
      ))}
    </>
  );
}

function Small({ items, pad }: { items: [string, string?][]; pad: number }) {
  return (
    <SmallCol $pad={pad}>
      {items.map(([icon, text], i) => (
        <SmallBtn key={i}>
          <Icon name={icon} size={16} />
          {text}
        </SmallBtn>
      ))}
    </SmallCol>
  );
}

const mainQat: [string, number][] = [
  ["refresh", 28],
  ["userEdit", 28],
  ["task", 28],
  ["binoculars", 28],
  ["clipOrange", 28],
  ["calc", 29],
  ["moneyAdd", 29],
  ["coinsAdd", 28],
  ["gear", 27],
  ["cal20", 28],
];

const navItems: [string, string][] = [
  ["clock", "Recently Accessed Events"],
  ["binoculars", "Find Event"],
  ["binoculars", "Find Space"],
  ["pinAdd", "Create Event"],
  ["list", "Event List"],
  ["venueCal", "Venue Calendar"],
  ["eventCal", "Event Calendar"],
];

const bigItems: [string, string][] = [
  ["home", "My Workplace"],
  ["pin", "Events"],
  ["bed", "Lodging"],
  ["crm", "CRM/Sales"],
  ["bubble", "Communications"],
  ["task", "Tasks"],
  ["calcGrey", "Finance"],
  ["clipOrange", "Reports"],
  ["merge", "Mail Merge"],
];

const lowerTabs: [string, string, number, boolean?][] = [
  ["contact", "Contacts", 84],
  ["noteEnv", "Notes", 70],
  ["group", "Group Discounts", 120],
  ["hat", "Other Event Roles", 130],
  ["resources", "Resources", 91],
  ["noteEnv", "Contract/Deposit", 119, true],
  ["func", "Function Setup", 120],
  ["attendee", "Attendee Setup", 118],
  ["exhibitor", "Exhibitor Setup", 115],
  ["calcGrey", "Financial Setup", 114],
];

const upperTabs: [string | null, string, number][] = [
  [null, "Description", 78],
  ["calcGrey", "Financial", 82],
  ["coins", "Opportunity", 100],
  ["share", "Social Media", 100],
  ["picture", "Event Logo", 95],
];

const lowerInitials = ["A", "A", "A", "A", "A", "A", "E"];

export default function App() {
  return (
    <Desktop>
      <GlobalStyle />
      <SharedDefs />
      <MainWindow>
        <Header $logo={58}>
          <LogoCell>
            <Logo />
          </LogoCell>
          <Title>400: Business Conference &amp; Expo - Event - EventPro</Title>
          <Qat $left={2}>
            {mainQat.map(([name, w]) => (
              <QatItem key={name} $w={w}>
                <Icon name={name} size={name === "refresh" ? 18 : 16} />
              </QatItem>
            ))}
            <QatItem $w={36}>
              <Icon name="info" size={16} />
              <Caret />
            </QatItem>
            <QatItem $w={38}>
              <Icon name="lockUser" size={16} />
              <Caret />
            </QatItem>
            <QatItem $w={22}>
              <QatMore />
            </QatItem>
          </Qat>
          <Controls $dim>
            <ControlBtn $w={30}><WinMin /></ControlBtn>
            <ControlBtn $w={30}><WinMax /></ControlBtn>
            <ControlBtn $w={30}><WinClose /></ControlBtn>
          </Controls>
          <TabsRow>
            <RibbonTab $active $w={53}>Home</RibbonTab>
            <RibbonTab $w={47}>View</RibbonTab>
            <RibbonTab $w={52}>Tools</RibbonTab>
            <Collapse><Chevron up /></Collapse>
          </TabsRow>
        </Header>
        <Ribbon>
          <Group $w={117}>
            <GroupBody>
              <LargeButtons items={[{ w: 116, icon: "newPage", text: "New", caret: true }]} />
            </GroupBody>
            <GroupLabel>Records Creation</GroupLabel>
          </Group>
          <Group $w={644} $pad={4}>
            <GroupBody>
              <LargeButtons
                items={[
                  { w: 44, icon: "gear", text: "Event\nEdit", size: 32 },
                  { w: 44, icon: "split", text: "Split", caret: true },
                  { w: 48, icon: "block", text: "Event\nMe" },
                  { w: 80, icon: "tplDown", text: "Copy Template" },
                  { w: 62, icon: "tplUp", text: "Save to" },
                  { w: 52, icon: "info", text: "Change" },
                  { w: 56, icon: "setLock", text: "Set Lock" },
                  { w: 46, icon: "moneyAdd", text: "Create" },
                  { w: 56, icon: "coinsAdd", text: "Create" },
                  { w: 58, icon: "note", text: "Add Note" },
                ]}
              />
              <Small pad={8} items={[["task", "Add Task"], ["userEdit", "User Fields"], ["lines"]]} />
            </GroupBody>
          </Group>
          <Group $w={137}>
            <GroupBody>
              <LargeButtons items={[{ w: 136, icon: "related", text: "Open Related", off: true }]} />
            </GroupBody>
          </Group>
          <Group $w={144} $pad={5}>
            <GroupBody>
              <LargeButtons items={[{ w: 50, icon: "cal20", text: "Itinerary" }]} />
              <Small pad={10} items={[["refresh", "Refresh"], ["audit", "Audit Log"], ["clipOrange"]]} />
            </GroupBody>
          </Group>
          <Group $w={260} $pad={3}>
            <GroupBody>
              <LargeButtons
                items={[
                  { w: 44, icon: "binoculars", text: "Find" },
                  { w: 44, icon: "first", text: "First", size: 28 },
                  { w: 56, icon: "prev", text: "Previous", size: 28 },
                ]}
              />
              <Small pad={7} items={[["next", "Next Event"], ["last", "Last Event"], ["binoculars"]]} />
            </GroupBody>
          </Group>
          <Group $w={60}>
            <GroupBody>
              <LargeButtons items={[{ w: 58, icon: "close", text: "Close" }]} />
            </GroupBody>
            <GroupLabel>Close</GroupLabel>
          </Group>
        </Ribbon>
        <Body>
          <Nav>
            <NavHead>
              Navigation
              <NavTools>
                <IconSvg $s={9} viewBox="0 0 10 10">
                  <path d="M3 1H7V5H9V6H5.5V10H4.5V6H1V5H3Z" fill="#666" />
                </IconSvg>
                <IconSvg $s={9} viewBox="0 0 10 10">
                  <path d="M1 1 L9 9M9 1 L1 9" stroke="#666" strokeWidth="1.5" />
                </IconSvg>
              </NavTools>
            </NavHead>
            <NavSection>Events</NavSection>
            <NavList>
              {navItems.map(([icon, text]) => (
                <NavItem key={text} $on={text === "Event List"}>
                  <Icon name={icon} size={16} />
                  {text}
                </NavItem>
              ))}
            </NavList>
            <NavSplit />
            <BigList>
              {bigItems.map(([icon, text]) => (
                <BigItem key={text} $on={text === "Events"}>
                  <Icon name={icon} size={16} />
                  {text}
                </BigItem>
              ))}
            </BigList>
            <NavFoot>
              <Icon name="sort" size={18} />
              <Icon name="disc" size={18} />
              <Icon name="bars" size={18} />
              <Icon name="chart" size={18} />
              <Chevron />
            </NavFoot>
          </Nav>
          <DocCol>
            <DocStrip>
              <DocTab>
                <Icon name="pin" size={16} />
                400:
              </DocTab>
              <Collapse><Caret /></Collapse>
            </DocStrip>
            <DocPage>
              <EventBox>
                <EventLegend>
                  <Icon name="pin" size={16} />
                  Eve
                </EventLegend>
                <EventBookRow>
                  <BookLabel>Book #</BookLabel>
                  <SplitRow>
                    <EventBar $color="#00ff00">
                      <FieldBtn $w={20}>
                        <Icon name="tableAdd" size={16} />
                      </FieldBtn>
                    </EventBar>
                    <EventBar $color="#32cd32" />
                  </SplitRow>
                </EventBookRow>
              </EventBox>
              <BackTabs>
                <BackTab $w={60}>
                  <Icon name="panels" size={15} />
                  Eve
                </BackTab>
                <BackTab $w={80} $mr={10} $end>Web Pages</BackTab>
              </BackTabs>
              <BackPanel $pad="6px 6px 2px 6px">
                <BackTabs>
                  <BackTab $w={60}>
                    <Icon name="grid" size={15} />
                    Boo
                  </BackTab>
                </BackTabs>
                <BackPanel $pad="0 4px 3px 4px">
                  <BackTool $h={32}>
                    <Icon name="newPage" size={14} />
                    <Icon name="greenBox" size={14} />
                  </BackTool>
                  <DataGrid $h={124} $mb={18}>
                    <GridHead $h={32}>
                      <GridSel />
                      <GridCaption>Sta</GridCaption>
                      <GridEnd />
                    </GridHead>
                    <GridBody $h={63}>
                      <GridRows>
                        {[0, 1, 2].map((i) => (
                          <GridRow key={i}>
                            <RowMark>{i === 0 && <RowArrow />}</RowMark>
                            <RowCell $bg="#00ff00">Con</RowCell>
                            <RowValue $bg={i === 0 ? "#e8f3fb" : "#fff"}>00</RowValue>
                          </GridRow>
                        ))}
                      </GridRows>
                      <Scroll>
                        <Chevron up />
                        <ScrollThumb $top={17} $h={18} />
                        <Chevron />
                      </Scroll>
                    </GridBody>
                    <GridFoot>
                      <FootBox>00</FootBox>
                    </GridFoot>
                  </DataGrid>
                  <LowerBack>
                    <BackTool $h={27}>
                      <Icon name="table" size={17} />
                      S
                    </BackTool>
                    <BackTool $h={29}>
                      <Icon name="newPage" size={14} />
                    </BackTool>
                    <DataGrid $h={196}>
                      <GridHead $h={19}>
                        <GridSel />
                        <GridCaption>F</GridCaption>
                        <GridEnd />
                      </GridHead>
                      <GridBody $h={147}>
                        <GridRows>
                          {lowerInitials.map((n, i) => (
                            <GridRow key={i}>
                              <RowMark>{i === 0 && <RowArrow />}</RowMark>
                              <RowCell $bg="#e6e6fa">{n}</RowCell>
                              <RowValue $bg={i === 0 ? "#e8f3fb" : "#fff"}>0</RowValue>
                            </GridRow>
                          ))}
                        </GridRows>
                        <Scroll>
                          <Chevron up />
                          <ScrollThumb $top={18} $h={55} />
                          <Chevron />
                        </Scroll>
                      </GridBody>
                    </DataGrid>
                  </LowerBack>
                </BackPanel>
              </BackPanel>
            </DocPage>
          </DocCol>
        </Body>
        <StatusBar $h={23}>
          <StatusItem $w={112}>User: AliceK_001000</StatusItem>
          <StatusItem $w={130}>Client ID: PSI001000AK2</StatusItem>
          <StatusItem $w={122}>Memory Usage: 213MB</StatusItem>
          <StatusItem $w={100}>Version: 18.0.2</StatusItem>
          <Grip />
        </StatusBar>
      </MainWindow>

      <Dialog>
        <Header $logo={57}>
          <LogoCell>
            <Logo />
          </LogoCell>
          <Title>400: Business Conference &amp; Expo - Event</Title>
          <Qat $left={1}>
            {["refresh", "userEdit", "calc", "save", "saveClose", "undo"].map((n) => (
              <QatItem key={n} $w={28.2}>
                <Icon name={n} size={n === "refresh" ? 18 : 16} />
              </QatItem>
            ))}
            <QatItem $w={31}>
              <QatMore />
            </QatItem>
          </Qat>
          <Controls>
            <ControlBtn $w={32}><WinMin /></ControlBtn>
            <ControlBtn $w={32}><WinMax /></ControlBtn>
            <ControlBtn $w={32}><WinClose /></ControlBtn>
          </Controls>
          <TabsRow>
            <RibbonTab $active $w={53}>Home</RibbonTab>
            <Collapse><Chevron up /></Collapse>
          </TabsRow>
        </Header>
        <Ribbon>
          <Group $w={59}>
            <GroupBody>
              <LargeButtons items={[{ w: 55, icon: "close", text: "Close" }]} />
            </GroupBody>
            <GroupLabel>Close</GroupLabel>
          </Group>
          <Group $w={111}>
            <GroupBody>
              <LargeButtons
                items={[
                  { w: 50, icon: "save", text: "Save" },
                  { w: 52, icon: "saveClose", text: "Save and\nClose" },
                ]}
              />
            </GroupBody>
            <GroupLabel>Save</GroupLabel>
          </Group>
          <Group $w={320} $pad={2}>
            <GroupBody>
              <LargeButtons
                items={[
                  { w: 66, icon: "userEdit", text: "User Fields" },
                  { w: 48, icon: "check", text: "Check\nSpelling" },
                  { w: 88, icon: "addRes", text: "Add Resources" },
                  { w: 64, icon: "calc", text: "Recalculate" },
                  { w: 48, icon: "undo", text: "Cancel" },
                ]}
              />
            </GroupBody>
            <GroupLabel>Edit</GroupLabel>
          </Group>
          <Group $w={138}>
            <GroupBody>
              <LargeButtons items={[{ w: 136, icon: "related", text: "Open Related\nRecord", off: true }]} />
            </GroupBody>
            <GroupLabel>Open Related Record</GroupLabel>
          </Group>
          <Group $w={103} $pad={3}>
            <GroupBody>
              <LargeButtons
                items={[
                  { w: 50, icon: "refresh", text: "Refresh" },
                  { w: 44, icon: "audit", text: "Audit\nLog" },
                ]}
              />
            </GroupBody>
            <GroupLabel>View</GroupLabel>
          </Group>
        </Ribbon>
        <Content>
          <UpperRow>
            <EventForm>
              <Fields rows={eventFields} labelW={102} />
            </EventForm>
            <Splitter $w={22} $y={116} />
            <UpperRight>
              <TabStrip>
                {upperTabs.map(([icon, text, w]) => (
                  <FormTab key={text} $w={w} $active={text === "Description"}>
                    {icon && <Icon name={icon} size={15} />}
                    {text}
                  </FormTab>
                ))}
              </TabStrip>
              <TabPanel>
                <DescForm>
                  <Fields rows={descFields} labelW={102} />
                </DescForm>
              </TabPanel>
            </UpperRight>
          </UpperRow>
          <LowerArea>
            <TabStrip $left={1}>
              {lowerTabs.map(([icon, text, w, active]) => (
                <FormTab key={text} $w={w} $active={active}>
                  <Icon name={icon} size={15} />
                  {text}
                </FormTab>
              ))}
            </TabStrip>
            <LowerPanel>
              <ContractCol>
                <TabStrip>
                  <FormTab $w={67} $active>Contract</FormTab>
                  <FormTab $w={114}>
                    <Icon name="noteEnv" size={15} />
                    Contract Notes
                  </FormTab>
                </TabStrip>
                <ContractPanel>
                  <Fields rows={contractFields} labelW={123} />
                </ContractPanel>
              </ContractCol>
              <Splitter $w={22} $y={92} />
              <DepositBox>
                <DepositLegend>Deposit</DepositLegend>
                <Fields rows={depositFields} labelW={117} />
              </DepositBox>
            </LowerPanel>
          </LowerArea>
          <StatusBar $h={24}>
            <StatusItem $w={200}>User: AliceK_001000</StatusItem>
            <Grip />
          </StatusBar>
        </Content>
      </Dialog>
    </Desktop>
  );
}
